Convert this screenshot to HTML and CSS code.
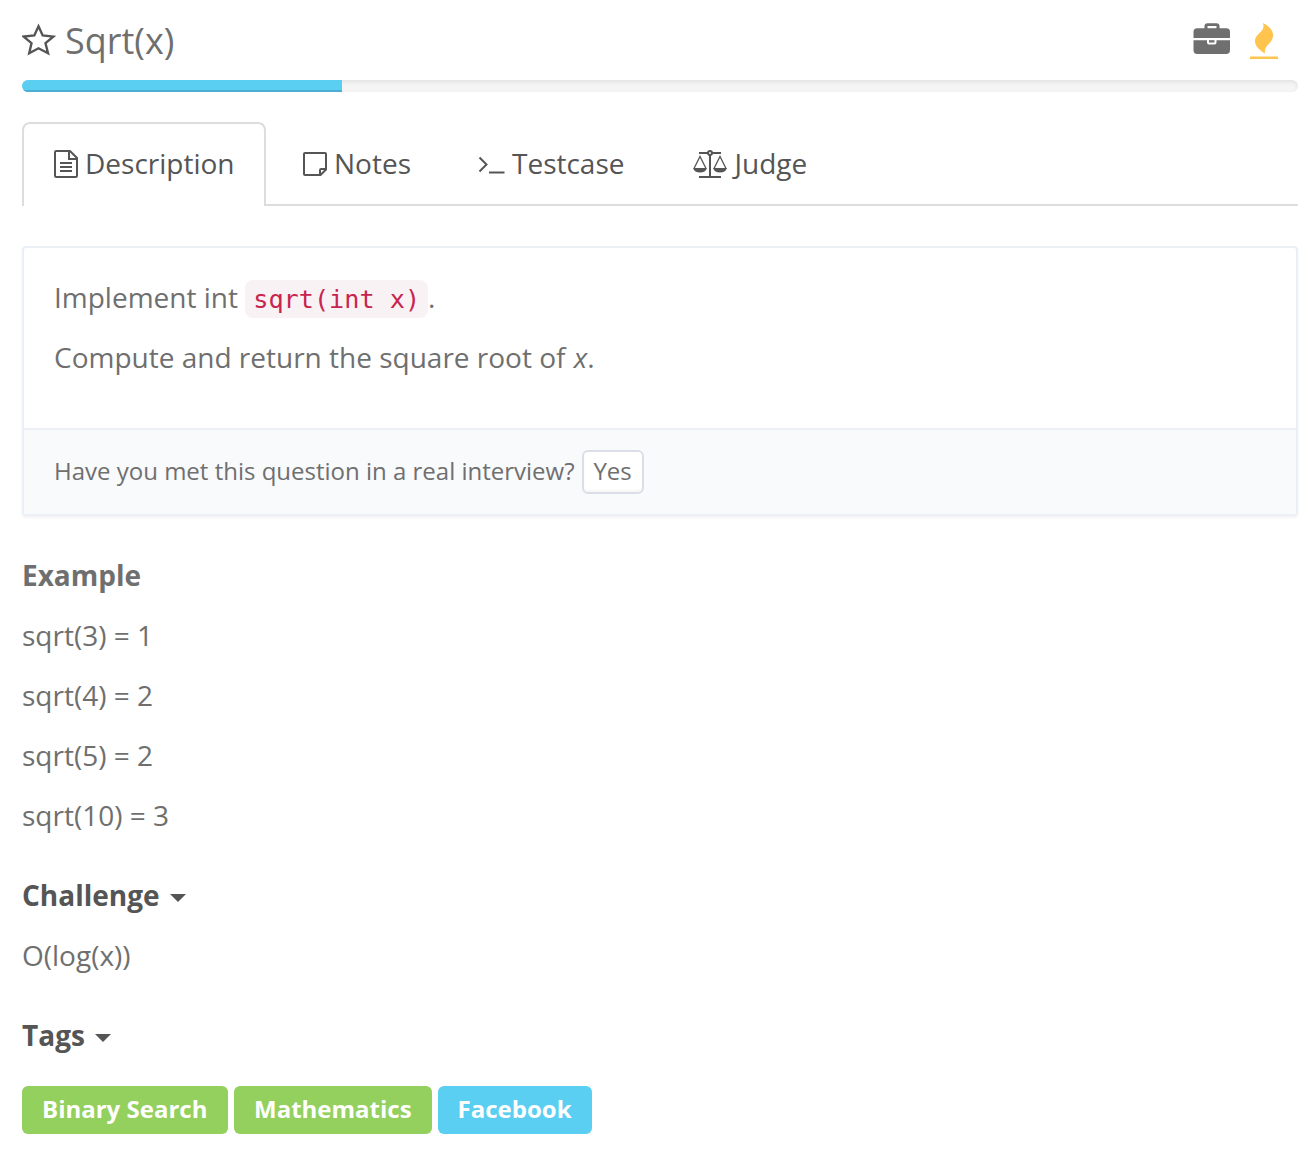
FILE: index.html
```html
<!DOCTYPE html>
<html lang="en">
<head>
<meta charset="utf-8">
<title>Sqrt(x)</title>
<link rel="stylesheet" href="styles.css">
</head>
<body>
<header class="header">
  <svg class="star" width="34" height="34" viewBox="0 0 34 34"><path d="M16.500 3.300 20.700 12.500 31.300 13.600 23.500 20.200 26 30.300 16.500 25.300 7.200 30.300 9.500 20.200 1.700 13.600 12.300 12.500Z" fill="none" stroke="currentColor" stroke-width="2.400"/></svg>
  <h1 class="title">Sqrt(x)</h1>
  <div class="badges">
    <svg class="briefcase" width="38" height="34" viewBox="0 0 38 34"><path d="M11.500 7V4.200a3 3 0 0 1 3-3h9a3 3 0 0 1 3 3V7h-3V4h-9V7Z"/><path d="M.5 16V10a3.700 3.700 0 0 1 3.700-3.700h29.200A3.700 3.700 0 0 1 37 10v6Z"/><path d="M.5 18.200h13.500v2.200a2 2 0 0 0 2 2h5.500a2 2 0 0 0 2-2v-2.200H37v10a3.700 3.700 0 0 1-3.700 3.700H4.200a3.700 3.700 0 0 1-3.700-3.700Z"/><path d="M16 18.200h5.500v2.300H16z"/></svg>
    <svg class="flame" width="28" height="37" viewBox="0 0 28 37"><path d="M13 0C20 3.500 23.500 8 23 13C22.500 21 13.500 22 15 30.500C9 27 5 23 5 18C5 10 16 9.500 13 0Z"/><path d="M0 33.500h28v2.500H0z"/></svg>
  </div>
</header>
<div class="progress"><div class="progress-bar"></div></div>

<nav class="tabs">
  <a class="tab active"><svg class="icon-file" width="24" height="28" viewBox="0 0 24 28"><path d="M1 2.200Q1 1 2.200 1H16L23 8V25.800Q23 27 21.800 27H2.200Q1 27 1 25.800ZM15 1V9H23M6 13H18M6 17H18M6 21H18"/></svg><span>Description</span></a>
  <a class="tab note"><svg class="icon-note" width="24" height="24" viewBox="0 0 24 24"><path d="M2 1H22Q23 1 23 2V17.500L17.500 23H2Q1 23 1 22V2Q1 1 2 1ZM17 23V18.200Q17 17 18.200 17H23"/></svg><span>Notes</span></a>
  <a class="tab term"><svg class="icon-term" width="27" height="24" viewBox="0 0 27 24"><path d="M1.500 5.500 8.500 12.500 1.500 19.500M11 20.500H26.500"/></svg><span>Testcase</span></a>
  <a class="tab judge"><svg class="icon-scale" width="34" height="28" viewBox="0 0 34 28"><path d="M17 5V27M6 3H15M19 3H28M6 27H28"/><circle cx="17" cy="3" r="2"/><path class="thin" d="M1 18.500 7 6.500 13 18.500M21 18.500 27 6.500 33 18.500"/><path class="pan" d="M0 18H14Q12.500 22.500 7 22.500T0 18ZM20 18H34Q32.500 22.500 27 22.500T20 18Z"/></svg><span>Judge</span></a>
</nav>

<section class="card">
  <div class="card-body">
    <p>Implement int <code>sqrt(int x)</code>.</p>
    <p>Compute and return the square root of <em>x</em>.</p>
  </div>
  <div class="card-footer"><span>Have you met this question in a real interview?</span><button class="yes">Yes</button></div>
</section>

<section class="group example">
  <h2>Example</h2>
  <p>sqrt(3) = 1</p>
  <p>sqrt(4) = 2</p>
  <p>sqrt(5) = 2</p>
  <p>sqrt(10) = 3</p>
</section>
<section class="group">
  <h2 class="dark">Challenge<span class="caret"></span></h2>
  <p>O(log(x))</p>
</section>
<section class="group">
  <h2 class="dark">Tags<span class="caret"></span></h2>
  <div class="labels"><span class="label wide">Binary Search</span><span class="label">Mathematics</span><span class="label company">Facebook</span></div>
</section>
</body>
</html>
```
FILE: styles.css
```css
* { box-sizing: border-box; }
body { margin: 0; padding: 0 14px 0 22px; background: #fff; color: #6f6f6f; font: 28px/38px "Open Sans", sans-serif; }
p, h1, h2 { margin: 0; }
p, h2 { height: 40px; }
svg { display: block; flex: none; }
.header { display: flex; align-items: center; height: 80px; padding: 0 20px 0 0; color: #555; }
.title { margin-left: 9px; font-size: 36px; font-weight: 400; color: #6f6f6f; line-height: 82px; height: 80px; }
.badges { display: flex; gap: 19px; margin-left: auto; align-items: flex-start; height: 36px; }
.briefcase { fill: #6f6f6f; }
.flame { fill: #ffc44d; margin-top: 1px; }
.progress { height: 12px; border-radius: 6px; overflow: hidden; background: #f5f5f5; box-shadow: inset 0 2px 4px rgba(0,0,0,.08); }
.progress-bar { width: 320px; height: 12px; background: #5bcff2; box-shadow: inset 0 -2px 0 #4baed3; }
.tabs { display: flex; gap: 4px; height: 84px; margin-top: 30px; box-shadow: inset 0 -2px #ddd; color: #555; }
.tab { display: flex; align-items: center; gap: 8px; height: 84px; padding: 0 32px; }
.tab span { height: 40px; }
.tab.active { width: 244px; padding: 0 29px 2px 30px; gap: 7px; border: 2px solid #ddd; border-bottom: 0; border-radius: 8px 8px 0 0; background: #fff; }
.tab.note { padding: 0 32px 0 33px; gap: 7px; }
.tab.term { padding: 0 32px 0 31px; gap: 7px; }
.tab.judge { gap: 8px; }
.tab svg { fill: none; stroke: currentColor; stroke-width: 2; }
.tab .thin { stroke-width: 1.3; }
.tab .pan { fill: currentColor; stroke: none; }
.card { height: 270px; margin-top: 40px; border: 2px solid #ebeff6; border-radius: 4px; box-shadow: 0 2px 3px rgba(0,0,0,.05); }
.card-body { display: grid; gap: 20px; align-content: start; height: 180px; padding: 30px; }
.card-body p { white-space: nowrap; }
.card-body em { margin-left: 1px; }
code { padding: 5px 8px 4px; border-radius: 8px; background: #f9f2f4; color: #c7254e; font: 25.2px/30px "DejaVu Sans Mono", monospace; }
.card-footer { display: flex; align-items: center; gap: 7px; height: 86px; padding: 0 30px; border-top: 2px solid #ebeff6; background: #f9fafc; font-size: 24px; }
.card-footer span { height: 40px; }
.yes { width: 62px; height: 44px; padding: 0 0 2px; border: 2px solid #dddde8; border-radius: 6px; background: #fff; box-shadow: inset 0 -2px 2px rgba(0,0,0,.04); color: #6f6f6f; font: 24px/36px "Open Sans", sans-serif; }
.group { display: grid; gap: 20px; margin-top: 40px; }
h2 { display: flex; font-size: 28px; font-weight: 700; }
.dark { color: #555; }
.caret { height: 0; margin: 18px 0 0 10.5px; border: 8px solid transparent; border-top-color: #555; border-bottom: 0; }
.labels { display: flex; gap: 6px; margin-top: 10px; }
.label { height: 48px; padding: 0 20px; border-radius: 6px; background: #93d05e; color: #fff; font-size: 24px; line-height: 46px; font-weight: 700; }
.wide { width: 206px; }
.company { background: #5bcff2; }
```
